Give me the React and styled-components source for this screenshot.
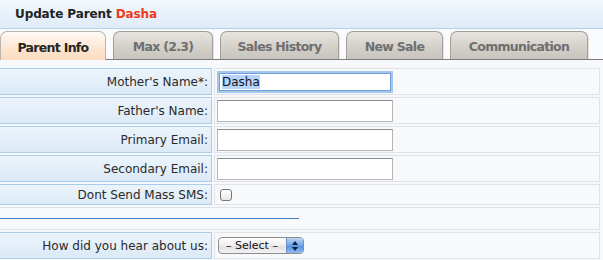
import React from 'react';
import styled, { createGlobalStyle } from 'styled-components';

const GlobalStyle = createGlobalStyle`
  html, body {
    margin: 0;
    padding: 0;
    background: #f6f8fb;
    font-family: 'DejaVu Sans', Verdana, sans-serif;
  }
`;

const Page = styled.div`
  width: 603px;
  height: 260px;
  overflow: hidden;
  background: #f6f8fb;
`;

const Header = styled.div`
  height: 28px;
  border-bottom: 1px solid #b3d2ec;
  background: linear-gradient(#f2f7fc, #dfebf7);
  display: flex;
  align-items: center;
  padding-left: 15px;
  font-size: 12px;
  font-weight: bold;
  color: #222;
  letter-spacing: -0.1px;
`;

const Accent = styled.span`
  color: #ee3a1c;
  margin-left: 4px;
`;

const TabBar = styled.div`
  display: flex;
  gap: 7px;
  margin-top: 2px;
  height: 28px;
  border-bottom: 1px solid #7d7d7d;
  background: #f9fbfd;
`;

const Tab = styled.div`
  width: ${(p) => p.w}px;
  box-sizing: border-box;
  height: ${(p) => (p.active ? 29 : 28)}px;
  border: 1px solid ${(p) => (p.active ? '#b9b4ad' : '#a39e97')};
  border-bottom: none;
  border-radius: 7px 7px 0 0;
  background: ${(p) =>
    p.active
      ? 'linear-gradient(#fffaf5, #fde2cb 70%, #fcdcc2)'
      : 'linear-gradient(#e8e5e1, #d2cec8 60%, #c8c4be)'};
  color: ${(p) => (p.active ? '#262626' : '#6f6f6f')};
  font-size: 12.5px;
  font-weight: bold;
  letter-spacing: -0.7px;
  display: flex;
  align-items: center;
  justify-content: center;
  padding-top: 2px;
  position: relative;
  z-index: ${(p) => (p.active ? 1 : 0)};
  box-shadow: ${(p) => (p.active ? 'none' : '1px 0 0 #e6e3df')};
`;

const Form = styled.div`
  margin-top: 8px;
  display: flex;
  flex-direction: column;
  gap: 2px;
`;

const Row = styled.div`
  display: grid;
  grid-template-columns: 212px 386px;
  column-gap: 2px;
  height: ${(p) => p.h}px;
`;

const Label = styled.div`
  box-sizing: border-box;
  border: 1px solid #a9cdeb;
  border-left: none;
  background: linear-gradient(#ecf4fb, #dbeaf7);
  display: flex;
  align-items: center;
  justify-content: flex-end;
  padding-right: 3px;
  font-size: 12px;
  color: #2a2a2a;
`;

const Value = styled.div`
  box-sizing: border-box;
  border: 1px solid #dfe2e6;
  background: #f7f9fb;
  display: flex;
  align-items: center;
  padding-left: 2px;
`;

const Wide = styled.div`
  box-sizing: border-box;
  height: 23px;
  width: 600px;
  border: 1px solid #dfe2e6;
  border-left: none;
  background: #f7f9fb;
  display: flex;
  align-items: center;
`;

const Rule = styled.div`
  width: 299px;
  height: 1px;
  background: #3a7fc4;
`;

const TextInput = styled.input`
  box-sizing: border-box;
  width: 176px;
  height: 22px;
  border: 1px solid #b6b6b6;
  border-top-color: #8a8a8a;
  background: #fff;
  font-family: 'DejaVu Sans', Verdana, sans-serif;
  font-size: 12px;
  color: #111;
  padding: 0 3px;
  margin: 0;
  outline: none;
`;

const Selected = styled.span`
  background: #b6d5fd;
`;

const FakeField = styled.div`
  box-sizing: border-box;
  width: 172px;
  height: 18px;
  margin-left: 2px;
  border: 1px solid #6f9fd6;
  box-shadow: 0 0 0 2px #a6c6ec;
  background: #fff;
  font-size: 12px;
  color: #111;
  padding-left: 2px;
  display: flex;
  align-items: center;
`;

const Check = styled.div`
  box-sizing: border-box;
  width: 12px;
  height: 12px;
  margin-left: 3px;
  border: 1px solid #777;
  border-radius: 3px;
  background: linear-gradient(#fff, #e9e9e9);
`;

const SelectBox = styled.div`
  box-sizing: border-box;
  width: 86px;
  height: 17px;
  margin-left: 1px;
  border: 1px solid #8c8c8c;
  border-radius: 4px;
  background: linear-gradient(#ffffff, #ececec 50%, #dedede 51%, #f2f2f2);
  display: flex;
  align-items: stretch;
  overflow: hidden;
  font-size: 11px;
  color: #111;
`;

const SelectText = styled.div`
  flex: 1;
  display: flex;
  align-items: center;
  padding-left: 7px;
`;

const SelectArrow = styled.div`
  width: 16px;
  border-left: 1px solid #6a8fc4;
  background: linear-gradient(#bcd6f6, #6fa4e6 50%, #4f8ce0 51%, #8fbdf3);
  display: flex;
  align-items: center;
  justify-content: center;
`;

const tabs = [
  { name: 'Parent Info', w: 106, active: true },
  { name: 'Max (2.3)', w: 100 },
  { name: 'Sales History', w: 119 },
  { name: 'New Sale', w: 97 },
  { name: 'Communication', w: 138 },
];

const fields = ["Father's Name:", 'Primary Email:', 'Secondary Email:'];

const App = () => (
  <>
    <GlobalStyle />
    <Page>
      <Header>
        Update Parent<Accent>Dasha</Accent>
      </Header>
      <TabBar>
        {tabs.map((t) => (
          <Tab key={t.name} w={t.w} active={t.active}>
            {t.name}
          </Tab>
        ))}
      </TabBar>
      <Form>
        <Row h={27}>
          <Label>Mother's Name*:</Label>
          <Value>
            <FakeField>
              <Selected>Dasha</Selected>
            </FakeField>
          </Value>
        </Row>
        {fields.map((f) => (
          <Row key={f} h={27}>
            <Label>{f}</Label>
            <Value>
              <TextInput type="text" />
            </Value>
          </Row>
        ))}
        <Row h={21}>
          <Label>Dont Send Mass SMS:</Label>
          <Value>
            <Check />
          </Value>
        </Row>
        <Wide>
          <Rule />
        </Wide>
        <Row h={27}>
          <Label>How did you hear about us:</Label>
          <Value>
            <SelectBox>
              <SelectText>– Select –</SelectText>
              <SelectArrow>
                <svg width="6" height="10" viewBox="0 0 6 10">
                  <path d="M3 0 L6 4 H0 Z M3 10 L6 6 H0 Z" fill="#10213a" />
                </svg>
              </SelectArrow>
            </SelectBox>
          </Value>
        </Row>
        <Row h={27}>
          <Label />
          <Value />
        </Row>
      </Form>
    </Page>
  </>
);

export default App;
